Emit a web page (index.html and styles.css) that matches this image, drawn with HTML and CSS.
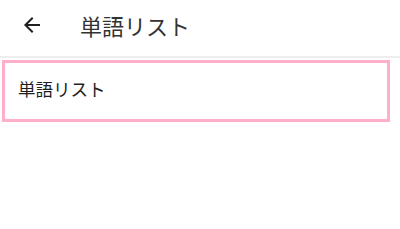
FILE: index.html
```html
<!DOCTYPE html>
<html lang="ja">
<head>
    <meta charset="UTF-8">
    <meta name="viewport" content="width=device-width, initial-scale=1.0">
    <title>単語リスト</title>
    <link rel="stylesheet" href="styles.css">
</head>
<body>
    <div class="app-bar">
        <button class="back-button" aria-label="戻る">
            <svg width="24" height="24" viewBox="0 0 24 24">
                <path d="M20 11H7.83l5.59-5.59L12 4l-8 8 8 8 1.41-1.41L7.83 13H20v-2z" fill="#1f1f1f"/>
            </svg>
        </button>
        <h1 class="title">単語リスト</h1>
    </div>
    <div class="content">
        <div class="list-card">
            <span class="list-name">単語リスト</span>
        </div>
    </div>
</body>
</html>
```

FILE: styles.css
```css
body {
    margin: 0;
    font-family: Roboto, "Noto Sans CJK JP", sans-serif;
    background-color: #fff;
    color: #1f1f1f;
}
.app-bar {
    height: 50px;
    display: flex;
    align-items: center;
    padding: 0 16px 6px;
    border-bottom: 2px solid #eeeeee;
}
.back-button {
    width: 32px;
    height: 32px;
    padding: 0;
    border: none;
    background: none;
    display: flex;
    align-items: center;
    justify-content: center;
    cursor: pointer;
}
.title {
    margin: 0 0 0 32px;
    font-size: 22px;
    font-weight: 400;
    color: #333;
}
.content {
    padding: 2px 10px 0 2px;
}
.list-card {
    height: 56px;
    border: 3px solid #ffafcb;
    display: flex;
    align-items: center;
    padding: 0 13px 6px;
    box-sizing: border-box;
    height: 62px;
    font-size: 17.5px;
}
```
